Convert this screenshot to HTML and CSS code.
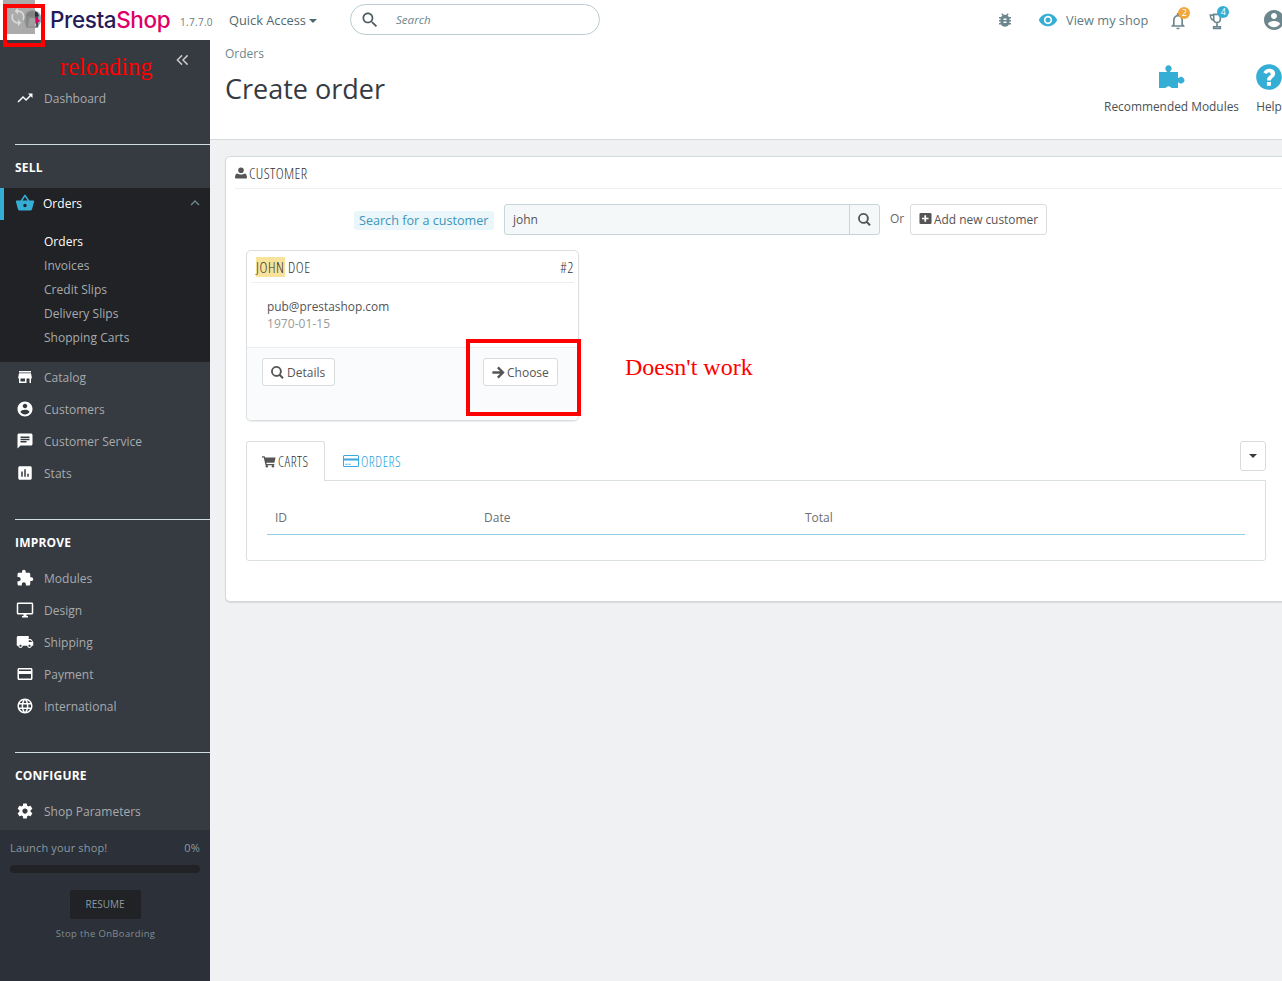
FILE: index.html
```html
<!DOCTYPE html>
<html lang="en">
<head>
<meta charset="utf-8">
<title>Create order</title>
<link rel="stylesheet" href="styles.css">
</head>
<body>
<div class="app">
  <header class="topbar">
    <div class="avatar">
      <svg class="penguin" viewBox="0 0 20 24"><circle cx="10" cy="12" r="9.5" fill="#8fb4c0"/><path d="M3 21V11c0-5 3-8 7-8s6 3 6 7v11z" fill="#4c4f55"/><path d="M5 5h10l2 4H3z" fill="#2e3034"/><path d="M7 11h6l1 9H5z" fill="#c9c9c4"/><path d="M13 9l5 5-5 3z" fill="#df0067"/></svg>
      <span class="reload-mask"><svg class="reload-icon" viewBox="0 0 24 24"><path d="M12 4V1L8 5l4 4V6c3.3 0 6 2.7 6 6 0 1-.25 2-.7 2.8l1.46 1.46A8 8 0 0 0 20 12c0-4.4-3.6-8-8-8zm0 14c-3.3 0-6-2.7-6-6 0-1 .25-2 .7-2.8L5.24 7.74A8 8 0 0 0 4 12c0 4.4 3.6 8 8 8v3l4-4-4-4z"/></svg></span>
    </div>
    <div class="logo"><span class="logo-a">Presta</span><span class="logo-b">Shop</span></div>
    <span class="version">1.7.7.0</span>
    <span class="quick">Quick Access <i class="caret"></i></span>
    <div class="searchbox">
      <svg class="ico ico-search" viewBox="0 0 24 24"><path d="M15.5 14h-.79l-.28-.27C15.41 12.59 16 11.11 16 9.5 16 5.91 13.09 3 9.5 3S3 5.91 3 9.5 5.91 16 9.5 16c1.61 0 3.09-.59 4.23-1.57l.27.28v.79l5 4.99L20.49 19l-4.99-5zm-6 0C7.01 14 5 11.99 5 9.5S7.01 5 9.5 5 14 7.01 14 9.5 11.99 14 9.5 14z"/></svg>
      <span>Search</span>
    </div>
    <div class="top-right">
      <svg class="ico ico-bug" viewBox="0 0 24 24"><path d="M20 8h-2.81c-.45-.78-1.07-1.45-1.82-1.96L17 4.41 15.59 3l-2.17 2.17C12.96 5.06 12.49 5 12 5c-.49 0-.96.06-1.41.17L8.41 3 7 4.41l1.62 1.63C7.88 6.55 7.26 7.22 6.81 8H4v2h2.09c-.05.33-.09.66-.09 1v1H4v2h2v1c0 .34.04.67.09 1H4v2h2.81c1.04 1.79 2.97 3 5.19 3s4.15-1.21 5.19-3H20v-2h-2.09c.05-.33.09-.66.09-1v-1h2v-2h-2v-1c0-.34-.04-.67-.09-1H20V8zm-6 8h-4v-2h4v2zm0-4h-4v-2h4v2z"/></svg>
      <svg class="ico ico-eye" viewBox="0 0 24 24"><path d="M12 4.5C7 4.5 2.73 7.61 1 12c1.73 4.39 6 7.5 11 7.5s9.27-3.11 11-7.5c-1.73-4.39-6-7.5-11-7.5zM12 17c-2.76 0-5-2.24-5-5s2.24-5 5-5 5 2.24 5 5-2.24 5-5 5zm0-8c-1.66 0-3 1.34-3 3s1.34 3 3 3 3-1.34 3-3-1.34-3-3-3z"/></svg>
      <span class="view-shop">View my shop</span>
      <span class="notif notif-bell">
        <svg class="ico ico-bell" viewBox="0 0 24 24"><path d="M12 22c1.1 0 2-.9 2-2h-4c0 1.1.9 2 2 2zm6-6v-5c0-3.07-1.63-5.64-4.5-6.32V4c0-.83-.67-1.5-1.5-1.5s-1.5.67-1.5 1.5v.68C7.64 5.36 6 7.92 6 11v5l-2 2v1h16v-1l-2-2zm-2 1H8v-6c0-2.48 1.51-4.5 4-4.5s4 2.02 4 4.5v6z"/></svg>
        <b class="badge badge-orange">2</b>
      </span>
      <span class="notif notif-cup">
        <svg class="ico ico-cup" viewBox="0 0 24 24"><path d="M7 3h10v7c0 3-2 5-5 5s-5-2-5-5zM9 5v5c0 2 1.2 3 3 3s3-1 3-3V5zM3 4h4v2H5c0 2 1 3.400 2.500 4l-.6 1.900C4.500 11 3 8 3 4zM11 14h2v4h-2zM7 18h10v4H7zm2 1.800v.4h6v-.4z"/></svg>
        <b class="badge badge-blue">4</b>
      </span>
      <svg class="ico ico-user" viewBox="0 0 24 24"><path d="M12 2C6.48 2 2 6.48 2 12s4.48 10 10 10 10-4.48 10-10S17.52 2 12 2zm0 3c1.66 0 3 1.34 3 3s-1.34 3-3 3-3-1.34-3-3 1.34-3 3-3zm0 14.200c-2.500 0-4.710-1.280-6-3.220.03-1.990 4-3.080 6-3.080 1.990 0 5.970 1.090 6 3.080-1.290 1.940-3.500 3.220-6 3.220z"/></svg>
    </div>
  </header>

  <div class="body-row">
    <aside class="sidebar">
      <div class="collapse-row"><svg class="ico ico-collapse" viewBox="0 0 14 12"><path d="M6.500 1L1.500 6l5 5M12.500 1l-5 5 5 5" fill="none" stroke="currentColor" stroke-width="1.600"/></svg></div>
      <a class="nav-item nav-dash"><svg class="ico" viewBox="0 0 24 24"><path d="M16 6l2.290 2.290-4.880 4.880-4-4L2 16.590 3.410 18l6-6 4 4 6.300-6.290L22 12V6z"/></svg><span>Dashboard</span></a>

      <div class="section"><h3>SELL</h3></div>
      <a class="nav-item nav-active"><svg class="ico" viewBox="0 0 24 24"><path d="M17.210 9l-4.380-6.560c-.19-.28-.51-.42-.83-.42-.32 0-.64.14-.83.43L6.790 9H2c-.55 0-1 .45-1 1 0 .09.01.18.04.27l2.540 9.270c.23.840 1 1.460 1.920 1.460h13c.92 0 1.690-.62 1.930-1.460l2.540-9.270L23 10c0-.55-.45-1-1-1h-4.790zM9 9l3-4.400L15 9H9zm3 8c-1.100 0-2-.9-2-2s.9-2 2-2 2 .9 2 2-.9 2-2 2z"/></svg><span>Orders</span><svg class="ico-chevron" viewBox="0 0 24 24"><path d="M12 8l-6 6 1.410 1.410L12 10.830l4.590 4.580L18 14z"/></svg></a>
      <ul class="submenu">
        <li class="sub-current">Orders</li>
        <li>Invoices</li>
        <li>Credit Slips</li>
        <li>Delivery Slips</li>
        <li>Shopping Carts</li>
      </ul>
      <a class="nav-item"><svg class="ico" viewBox="0 0 24 24"><path d="M20 4H4v2h16V4zm1 10v-2l-1-5H4l-1 5v2h1v6h10v-6h4v6h2v-6h1zm-9 4H6v-4h6v4z"/></svg><span>Catalog</span></a>
      <a class="nav-item"><svg class="ico" viewBox="0 0 24 24"><path d="M12 2C6.480 2 2 6.480 2 12s4.480 10 10 10 10-4.480 10-10S17.520 2 12 2zm0 3c1.660 0 3 1.340 3 3s-1.340 3-3 3-3-1.340-3-3 1.340-3 3-3zm0 14.200c-2.500 0-4.710-1.280-6-3.220.03-1.990 4-3.080 6-3.080 1.990 0 5.970 1.090 6 3.080-1.290 1.940-3.500 3.220-6 3.220z"/></svg><span>Customers</span></a>
      <a class="nav-item"><svg class="ico" viewBox="0 0 24 24"><path d="M20 2H4c-1.100 0-1.990.9-1.990 2L2 22l4-4h14c1.100 0 2-.9 2-2V4c0-1.100-.9-2-2-2zM6 9h12v2H6V9zm8 5H6v-2h8v2zm4-6H6V6h12v2z"/></svg><span>Customer Service</span></a>
      <a class="nav-item"><svg class="ico" viewBox="0 0 24 24"><path d="M19 3H5c-1.100 0-2 .9-2 2v14c0 1.100.9 2 2 2h14c1.100 0 2-.9 2-2V5c0-1.100-.9-2-2-2zM9 17H7v-7h2v7zm4 0h-2V7h2v10zm4 0h-2v-4h2v4z"/></svg><span>Stats</span></a>

      <div class="section section-next"><h3>IMPROVE</h3></div>
      <a class="nav-item"><svg class="ico" viewBox="0 0 24 24"><path d="M20.500 11H19V7c0-1.100-.9-2-2-2h-4V3.500C13 2.120 11.880 1 10.500 1S8 2.120 8 3.500V5H4c-1.100 0-1.990.9-1.990 2v3.800H3.500c1.490 0 2.700 1.210 2.700 2.700s-1.210 2.700-2.700 2.700H2V20c0 1.100.9 2 2 2h3.800v-1.500c0-1.490 1.210-2.700 2.700-2.700 1.490 0 2.700 1.210 2.700 2.700V22H17c1.100 0 2-.9 2-2v-4h1.500c1.380 0 2.500-1.120 2.500-2.500S21.880 11 20.500 11z"/></svg><span>Modules</span></a>
      <a class="nav-item"><svg class="ico" viewBox="0 0 24 24"><path d="M21 2H3c-1.100 0-2 .9-2 2v12c0 1.100.9 2 2 2h7v2H8v2h8v-2h-2v-2h7c1.100 0 2-.9 2-2V4c0-1.100-.9-2-2-2zm0 14H3V4h18v12z"/></svg><span>Design</span></a>
      <a class="nav-item"><svg class="ico" viewBox="0 0 24 24"><path d="M20 8h-3V4H3c-1.100 0-2 .9-2 2v11h2c0 1.660 1.340 3 3 3s3-1.340 3-3h6c0 1.660 1.340 3 3 3s3-1.340 3-3h2v-5l-3-4zM6 18.500c-.83 0-1.500-.67-1.500-1.500s.67-1.500 1.500-1.500 1.500.67 1.500 1.500-.67 1.500-1.500 1.500zm13.500-9l1.960 2.500H17V9.500h2.500zm-1.500 9c-.83 0-1.500-.67-1.500-1.500s.67-1.500 1.500-1.500 1.500.67 1.500 1.500-.67 1.500-1.500 1.500z"/></svg><span>Shipping</span></a>
      <a class="nav-item"><svg class="ico" viewBox="0 0 24 24"><path d="M20 4H4c-1.110 0-1.990.89-1.990 2L2 18c0 1.110.89 2 2 2h16c1.110 0 2-.89 2-2V6c0-1.110-.89-2-2-2zm0 14H4v-6h16v6zm0-10H4V6h16v2z"/></svg><span>Payment</span></a>
      <a class="nav-item"><svg class="ico" viewBox="0 0 24 24"><path d="M11.990 2C6.470 2 2 6.480 2 12s4.470 10 9.990 10C17.520 22 22 17.520 22 12S17.520 2 11.990 2zm6.930 6h-2.950c-.32-1.250-.78-2.450-1.380-3.560 1.840.63 3.370 1.910 4.330 3.560zM12 4.040c.83 1.200 1.480 2.530 1.910 3.960h-3.820c.43-1.430 1.080-2.760 1.910-3.960zM4.260 14C4.100 13.360 4 12.690 4 12s.1-1.360.26-2h3.380c-.08.66-.14 1.320-.14 2 0 .68.06 1.340.14 2H4.260zm.82 2h2.950c.32 1.250.78 2.450 1.380 3.560-1.840-.63-3.370-1.900-4.330-3.560zm2.950-8H5.080c.96-1.660 2.490-2.930 4.330-3.560C8.810 5.550 8.350 6.750 8.030 8zM12 19.960c-.83-1.200-1.480-2.530-1.910-3.960h3.820c-.43 1.430-1.080 2.760-1.910 3.960zM14.340 14H9.660c-.09-.66-.16-1.320-.16-2 0-.68.07-1.350.16-2h4.680c.09.650.16 1.320.16 2 0 .68-.07 1.340-.16 2zm.25 5.560c.6-1.110 1.060-2.310 1.380-3.560h2.950c-.96 1.650-2.490 2.930-4.330 3.560zM16.360 14c.08-.66.14-1.320.14-2 0-.68-.06-1.340-.14-2h3.380c.16.640.26 1.310.26 2s-.1 1.360-.26 2h-3.380z"/></svg><span>International</span></a>

      <div class="section section-next"><h3>CONFIGURE</h3></div>
      <a class="nav-item"><svg class="ico" viewBox="0 0 24 24"><path d="M19.430 12.980c.04-.32.07-.64.07-.98s-.03-.66-.07-.98l2.110-1.650c.19-.15.24-.42.12-.64l-2-3.460c-.12-.22-.39-.3-.61-.22l-2.490 1c-.52-.4-1.080-.73-1.690-.98l-.38-2.650C14.460 2.180 14.250 2 14 2h-4c-.25 0-.46.18-.49.42l-.38 2.650c-.61.25-1.170.59-1.690.98l-2.490-1c-.23-.09-.49 0-.61.22l-2 3.460c-.13.22-.07.49.12.64l2.110 1.650c-.04.32-.07.65-.07.98s.03.66.07.98l-2.110 1.650c-.19.15-.24.42-.12.64l2 3.460c.12.22.39.3.61.22l2.490-1c.52.4 1.080.73 1.690.98l.38 2.650c.03.24.24.42.49.42h4c.25 0 .46-.18.49-.42l.38-2.650c.61-.25 1.170-.59 1.690-.98l2.490 1c.23.09.49 0 .61-.22l2-3.460c.12-.22.07-.49-.12-.64l-2.110-1.650zM12 15.500c-1.930 0-3.500-1.570-3.500-3.500s1.570-3.500 3.500-3.500 3.500 1.570 3.500 3.500-1.570 3.500-3.500 3.500z"/></svg><span>Shop Parameters</span></a>

      <div class="onboarding">
        <div class="onb-head"><span>Launch your shop!</span><span>0%</span></div>
        <div class="onb-bar"></div>
        <div class="onb-resume">RESUME</div>
        <div class="onb-stop">Stop the OnBoarding</div>
      </div>
    </aside>

    <main class="main">
      <div class="toolbar">
        <div class="toolbar-left">
          <div class="crumb">Orders</div>
          <h1>Create order</h1>
        </div>
        <div class="toolbar-actions">
          <div class="action">
            <svg class="action-ico" viewBox="0 0 28 28"><path d="M1 9h7.800V8.200a3.200 3.200 0 1 1 3.400 0V9H20v6h.8a3.200 3.200 0 1 1 0 4.400H20V25h-6.500a3.500 3.500 0 0 0-6 0H1z"/></svg>
            <span>Recommended Modules</span>
          </div>
          <div class="action">
            <svg class="action-ico" viewBox="0 0 24 24"><path d="M12 1C5.900 1 1 5.900 1 12s4.900 11 11 11 11-4.900 11-11S18.100 1 12 1zm1.700 18.500h-3.500v-3.300h3.500zm2.900-8.300c-.5.800-1.300 1.400-2 2-.6.5-.9.900-.9 1.800h-3.400c0-1.800.5-2.700 1.600-3.600.7-.6 1.600-1.100 1.600-2 0-.8-.7-1.300-1.500-1.300-1 0-1.800.6-2.200 1.400L7.200 8.200C8.100 6.200 10 5 12.300 5c2.500 0 5 1.300 5 3.900 0 .9-.3 1.600-.7 2.300z"/></svg>
            <span>Help</span>
          </div>
        </div>
      </div>

      <section class="card">
        <div class="card-head">
          <svg class="fa fa-user" viewBox="0 0 14 14"><path d="M7 0.500a3.300 3.300 0 1 1 0 6.600 3.300 3.300 0 0 1 0-6.600zM1 13.500c-.6 0-1-.4-1-1 0-2.500.8-5 3-5 .9.800 2.500 1.300 4 1.300s3.100-.5 4-1.300c2.200 0 3 2.500 3 5 0 .6-.4 1-1 1z"/></svg>
          <span>CUSTOMER</span>
        </div>
        <div class="search-row">
          <span class="search-label">Search for a customer</span>
          <div class="input-group">
            <div class="input-field">john</div>
            <div class="input-btn"><svg class="fa fa-search" viewBox="0 0 14 14"><path d="M5.800 0a5.800 5.800 0 0 1 4.700 9.200l3.200 3.200-1.500 1.500-3.200-3.200A5.800 5.800 0 1 1 5.800 0zm0 2a3.800 3.800 0 1 0 0 7.600 3.800 3.800 0 0 0 0-7.600z"/></svg></div>
          </div>
          <span class="or">Or</span>
          <div class="btn btn-add"><svg class="fa fa-plus" viewBox="0 0 14 14"><path d="M2 1h10a1.500 1.500 0 0 1 1.500 1.500v9A1.500 1.500 0 0 1 12 13H2a1.500 1.500 0 0 1-1.500-1.500v-9A1.500 1.500 0 0 1 2 1zm3.800 2.500v2.600H3.200v1.800h2.600v2.600h1.900V7.900h2.600V6.100H7.700V3.500z"/></svg>Add new customer</div>
        </div>

        <div class="cust-card">
          <div class="cust-head">
            <span><mark>JOHN</mark> DOE</span>
            <span>#2</span>
          </div>
          <div class="cust-info">
            <div class="cust-email">pub@prestashop.com</div>
            <div class="cust-date">1970-01-15</div>
          </div>
          <div class="cust-foot">
            <div class="btn btn-small btn-details"><svg class="fa fa-search" viewBox="0 0 14 14"><path d="M5.800 0a5.800 5.800 0 0 1 4.700 9.200l3.200 3.200-1.500 1.500-3.200-3.200A5.800 5.800 0 1 1 5.800 0zm0 2a3.800 3.800 0 1 0 0 7.600 3.800 3.800 0 0 0 0-7.600z"/></svg>Details</div>
            <div class="btn btn-small btn-choose"><svg class="fa fa-arrow" viewBox="0 0 14 14"><path d="M7.200.6L13.600 7l-6.400 6.400-1.800-1.800 3.300-3.300H.4V5.700h8.300L5.400 2.400z"/></svg>Choose</div>
          </div>
        </div>

        <div class="tabs-row">
          <div class="tab tab-active"><svg class="fa fa-cart" viewBox="0 0 16 14"><path d="M0 1h3l.5 1.500H15.500l-1.300 6H5l.3 1.300h8.700v1.400H4L2 2.400H0z"/><circle cx="5.500" cy="12.500" r="1.400"/><circle cx="12.500" cy="12.500" r="1.400"/></svg>CARTS</div>
          <div class="tab tab-link"><svg class="fa fa-credit" viewBox="0 0 16 14"><path fill-rule="evenodd" d="M1.500 1h13A1.500 1.500 0 0 1 16 2.500v9a1.500 1.500 0 0 1-1.500 1.500h-13A1.500 1.500 0 0 1 0 11.500v-9A1.500 1.500 0 0 1 1.500 1zM1 4.500h14V2.500a.5.5 0 0 0-.5-.5h-13a.5.5 0 0 0-.5.5zM1 6.500v5a.5.5 0 0 0 .5.5h13a.5.5 0 0 0 .5-.5v-5zM2.500 9.800h2v1h-2zm3 0h2v1h-2z"/></svg>ORDERS</div>
          <div class="dropdown-btn"><i class="caret caret-dark"></i></div>
        </div>
        <div class="tab-panel">
          <div class="table-head">
            <span class="th-id">ID</span>
            <span class="th-date">Date</span>
            <span class="th-total">Total</span>
          </div>
        </div>
      </section>
    </main>
  </div>

  <div class="mark-box mark-box-avatar"></div>
  <div class="mark-box mark-box-choose"></div>
  <div class="note note-reload">reloading</div>
  <div class="note note-work">Doesn't work</div>
</div>
</body>
</html>
```

FILE: styles.css
```css
* { box-sizing: border-box; }
html, body { margin: 0; height: 100%; }
body { overflow: hidden; font-family: "Open Sans", sans-serif; font-size: 12px; color: #363a41; background: #eff1f2; }
h1, h3, ul { margin: 0; padding: 0; }
ul { list-style: none; }
svg { display: block; fill: currentColor; flex: none; }
.app { position: relative; width: 1282px; height: 981px; overflow: hidden; display: flex; flex-direction: column; }

/* top bar */
.topbar { height: 40px; background: #fff; display: flex; align-items: center; flex: none; position: relative; }
.avatar { width: 50px; height: 40px; position: relative; flex: none; }
.penguin { position: absolute; left: 23px; top: 7px; width: 19px; height: 24px; }
.reload-mask { position: absolute; left: 3px; top: 0; width: 32px; height: 34px; background: rgba(150,150,150,.8); display: flex; align-items: center; padding-left: 5px; }
.reload-icon { width: 20px; height: 22px; color: #d9d9d9; }
.logo { font-family: Inter, sans-serif; font-weight: 500; font-size: 22.500px; letter-spacing: -.4px; line-height: 42px; width: 130px; flex: none; }
.logo-a { color: #251b5b; }
.logo-b { color: #df0067; }
.version { font-size: 10px; letter-spacing: .3px; color: #6c7a80; margin-top: 4px; width: 49px; flex: none; }
.quick { font-size: 12.800px; color: #4f6770; width: 121px; flex: none; margin-top: -1px; }
.caret { display: inline-block; border-top: 4px solid currentColor; border-left: 4px solid transparent; border-right: 4px solid transparent; vertical-align: 2px; }
.searchbox { width: 250px; height: 31px; margin-top: -1px; border: 1px solid #bbcdd2; border-radius: 16px; display: flex; align-items: center; padding-left: 9px; flex: none; font-size: 11.600px; font-style: italic; color: #6c868e; }
.ico-search { width: 20px; height: 20px; color: #4c5b60; margin-right: 16px; }
.top-right { flex: 1; display: flex; align-items: center; height: 40px; padding-left: 396px; color: #6c868e; }
.ico-bug { width: 18px; height: 18px; }
.ico-eye { width: 20px; height: 20px; color: #34aed4; margin-left: 24px; }
.view-shop { font-size: 12.800px; margin-left: 8px; color: #607a82; white-space: nowrap; margin-top: -1px; }
.notif { position: relative; display: block; }
.notif-bell { margin-left: 20px; }
.notif-cup { margin-left: 19px; }
.ico-bell { width: 20px; height: 20px; margin-top: 2px; }
.ico-cup { width: 20px; height: 22px; margin-top: 2px; }
.badge { position: absolute; width: 12px; height: 12px; border-radius: 50%; color: #fff; font-size: 9px; font-weight: 400; line-height: 12px; text-align: center; top: -2px; left: 10px; }
.badge-orange { background: #f0a83a; }
.badge-blue { background: #34aed4; }
.ico-user { width: 24px; height: 24px; margin-left: 35px; }

/* layout */
.body-row { display: flex; flex: 1; min-height: 0; }
.sidebar { width: 210px; flex: none; background: #363a41; display: flex; flex-direction: column; color: #bebebe; }
.collapse-row { height: 40px; display: flex; justify-content: flex-end; align-items: center; padding-right: 21px; }
.ico-collapse { width: 13px; height: 12px; color: #c8c8c8; }
.nav-item { height: 32px; display: flex; align-items: center; padding-left: 16px; color: #a8abae; font-size: 12px; letter-spacing: .02px; flex: none; }
.nav-item .ico { width: 18px; height: 18px; margin-right: 10px; color: #fff; }
.nav-dash { margin-top: 2px; margin-bottom: 1px; }
.section { margin-top: 29px; margin-left: 15px; border-top: 1px solid #d1dde0; height: 44px; padding-top: 2px; display: flex; align-items: center; }
.section-next { margin-top: 30px; height: 43px; padding-top: 3px; }
.section h3 { font-size: 12px; font-weight: 700; color: #fff; letter-spacing: .2px; }
.nav-active { background: #202226; border-left: 4px solid #34aed4; padding-left: 11px; padding-bottom: 2px; color: #fff; position: relative; height: 32px; }
.nav-active .ico { color: #34aed4; width: 20px; height: 20px; margin-right: 8px; }
.ico-chevron { width: 18px; height: 18px; margin-left: auto; margin-right: 6px; color: #6c868e; }
.submenu { background: #202226; padding: 10px 0 12px; margin-bottom: -1px; flex: none; }
.submenu li { height: 24px; line-height: 24px; padding-left: 44px; color: #a8abae; letter-spacing: .03px; }
.submenu .sub-current { color: #fff; }
.onboarding { margin-top: auto; height: 151px; background: #2c3038; padding: 9px 10px 0; flex: none; }
.onb-head { display: flex; justify-content: space-between; font-size: 11px; letter-spacing: .16px; color: #8a9aa0; line-height: 18px; }
.onb-bar { height: 8px; background: #202226; border-radius: 4px; margin-top: 8px; }
.onb-resume { width: 71px; height: 29px; margin: 17px auto 0; background: #202226; border-radius: 2px; color: #8a9aa0; font-size: 10px; line-height: 29px; text-align: center; }
.onb-stop { text-align: center; font-size: 9.500px; letter-spacing: .35px; color: #7f8e94; margin-top: 8px; padding-left: 1px; }

/* main */
.main { flex: 1; min-width: 0; }
.toolbar { height: 100px; background: #fff; border-bottom: 1px solid #d4dadc; display: flex; justify-content: space-between; padding-left: 15px; }
.crumb { font-size: 12px; color: #6c868e; margin-top: 5px; line-height: 17px; }
.toolbar h1 { font-size: 27px; font-weight: 400; color: #363a41; line-height: 36px; margin-top: 9px; }
.toolbar-actions { display: flex; gap: 16px; padding-top: 23px; margin-right: -1px; }
.action { display: flex; flex-direction: column; align-items: center; color: #4a5256; font-size: 11.900px; }
.action span { margin-top: 7px; line-height: 17px; white-space: nowrap; }
.action-ico { width: 28px; height: 28px; color: #34aed4; }

.card { margin: 16px 0 0 15px; width: 1075px; height: 446px; background: #fff; border: 1px solid #d3dadc; border-radius: 5px; box-shadow: 0 1px 1px rgba(0,0,0,.1); padding: 0 0 0 20px; }
.card-head { height: 32px; margin-left: -11px; display: flex; align-items: center; font-family: "Open Sans", sans-serif; font-stretch: 75%; font-weight: 300; font-size: 15px; letter-spacing: .4px; color: #333; border-bottom: 1px solid #eee; padding-left: 0; }
.fa { display: inline-block; color: #555; }
.fa-user { width: 12px; height: 12px; margin-right: 2px; }
.search-row { display: flex; align-items: center; height: 31px; margin-top: 15px; padding-left: 108px; }
.search-label { font-size: 12.600px; color: #3d95b8; background: #eaf6fa; border-radius: 3px; height: 19px; line-height: 19px; padding: 0 5px; width: 140px; white-space: nowrap; flex: none; margin-top: 1px; }
.input-group { display: flex; height: 31px; margin-left: 10px; width: 376px; flex: none; border: 1px solid #c7d6db; border-radius: 3px; background: #f5f8f9; }
.input-field { flex: 1; padding-left: 8px; font-size: 12px; line-height: 29px; color: #555; }
.input-btn { width: 30px; border-left: 1px solid #c7d6db; display: flex; align-items: center; justify-content: center; }
.fa-search { width: 13px; height: 13px; }
.or { margin-left: 10px; width: 20px; font-size: 12px; color: #666; margin-top: -2px; flex: none; }
.btn { display: flex; align-items: center; background: #fff; border: 1px solid #d8dcdd; border-radius: 3px; font-size: 12px; color: #555; white-space: nowrap; }
.btn-add { height: 31px; padding: 0 8px 2px; font-size: 11.900px; width: 137px; }
.fa-plus { width: 13px; height: 13px; margin-right: 2px; }
.btn-small { height: 28px; padding: 0 8px; }
.btn-details { width: 73px; }
.btn-choose { width: 75px; }
.btn-small .fa { width: 13px; height: 13px; margin-right: 3px; }
.btn-small .fa-arrow { margin-right: 2px; }

.cust-card { width: 333px; height: 171px; margin-top: 15px; background: #fff; border: 1px solid #dadfe0; border-radius: 5px; box-shadow: 0 1px 1px rgba(0,0,0,.08); display: flex; flex-direction: column; overflow: hidden; }
.cust-head { height: 32px; margin: 0 4px; padding: 0 0 0 5px; display: flex; justify-content: space-between; align-items: center; border-bottom: 1px solid #eee; font-family: "Open Sans", sans-serif; font-stretch: 75%; font-weight: 300; font-size: 15px; letter-spacing: .55px; color: #333; }
mark { background: #f9e39b; color: #333; padding: 0; }
.cust-info { height: 64px; padding: 15px 0 0 20px; line-height: 17px; }
.cust-email { font-size: 11.900px; color: #555; }
.cust-date { font-size: 12px; letter-spacing: .05px; color: #999; }
.cust-foot { flex: 1; background: #fafbfc; border-top: 1px solid #eaedee; display: flex; justify-content: space-between; align-items: flex-start; padding: 10px 20px 0 15px; }

.tabs-row { display: flex; margin-top: 20px; height: 39px; position: relative; width: 1020px; }
.tab { display: flex; align-items: center; height: 40px; font-family: "Open Sans", sans-serif; font-stretch: 75%; font-weight: 300; font-size: 14px; letter-spacing: .5px; }
.tab-active { width: 79px; background: #fff; border: 1px solid #dadfe0; border-bottom: 0; border-radius: 3px 3px 0 0; color: #333; padding-left: 15px; position: relative; z-index: 1; height: 40px; }
.tab-link { color: #2a9fdc; padding-left: 18px; }
.fa-cart { width: 14px; height: 13px; margin-right: 2px; }
.fa-credit { width: 16px; height: 14px; margin-right: 2px; color: #38a8e0; }
.dropdown-btn { position: absolute; right: 0; top: 0; width: 26px; height: 30px; border: 1px solid #d8dcdd; border-radius: 3px; display: flex; align-items: center; justify-content: center; background: #fff; color: #363a41; }
.tab-panel { width: 1020px; height: 81px; border: 1px solid #dadfe0; border-radius: 0 0 3px 3px; padding: 20px 20px 0; }
.table-head { position: relative; height: 34px; border-bottom: 1px solid #8fd0e6; display: flex; align-items: center; color: #6b6f72; font-size: 12px; }
.th-id { padding-left: 8px; width: 217px; }
.th-date { width: 321px; }

/* annotations */
.mark-box { position: absolute; border: 4px solid #f00; }
.mark-box-avatar { left: 3px; top: 4px; width: 42px; height: 43px; }
.mark-box-choose { left: 466px; top: 339px; width: 115px; height: 77px; }
.note { position: absolute; font-family: "Liberation Serif", serif; color: #f00; white-space: nowrap; }
.note-reload { left: 60px; top: 52px; font-size: 24.500px; line-height: 30px; }
.note-work { left: 625px; top: 352px; font-size: 24px; line-height: 30px; }
```
